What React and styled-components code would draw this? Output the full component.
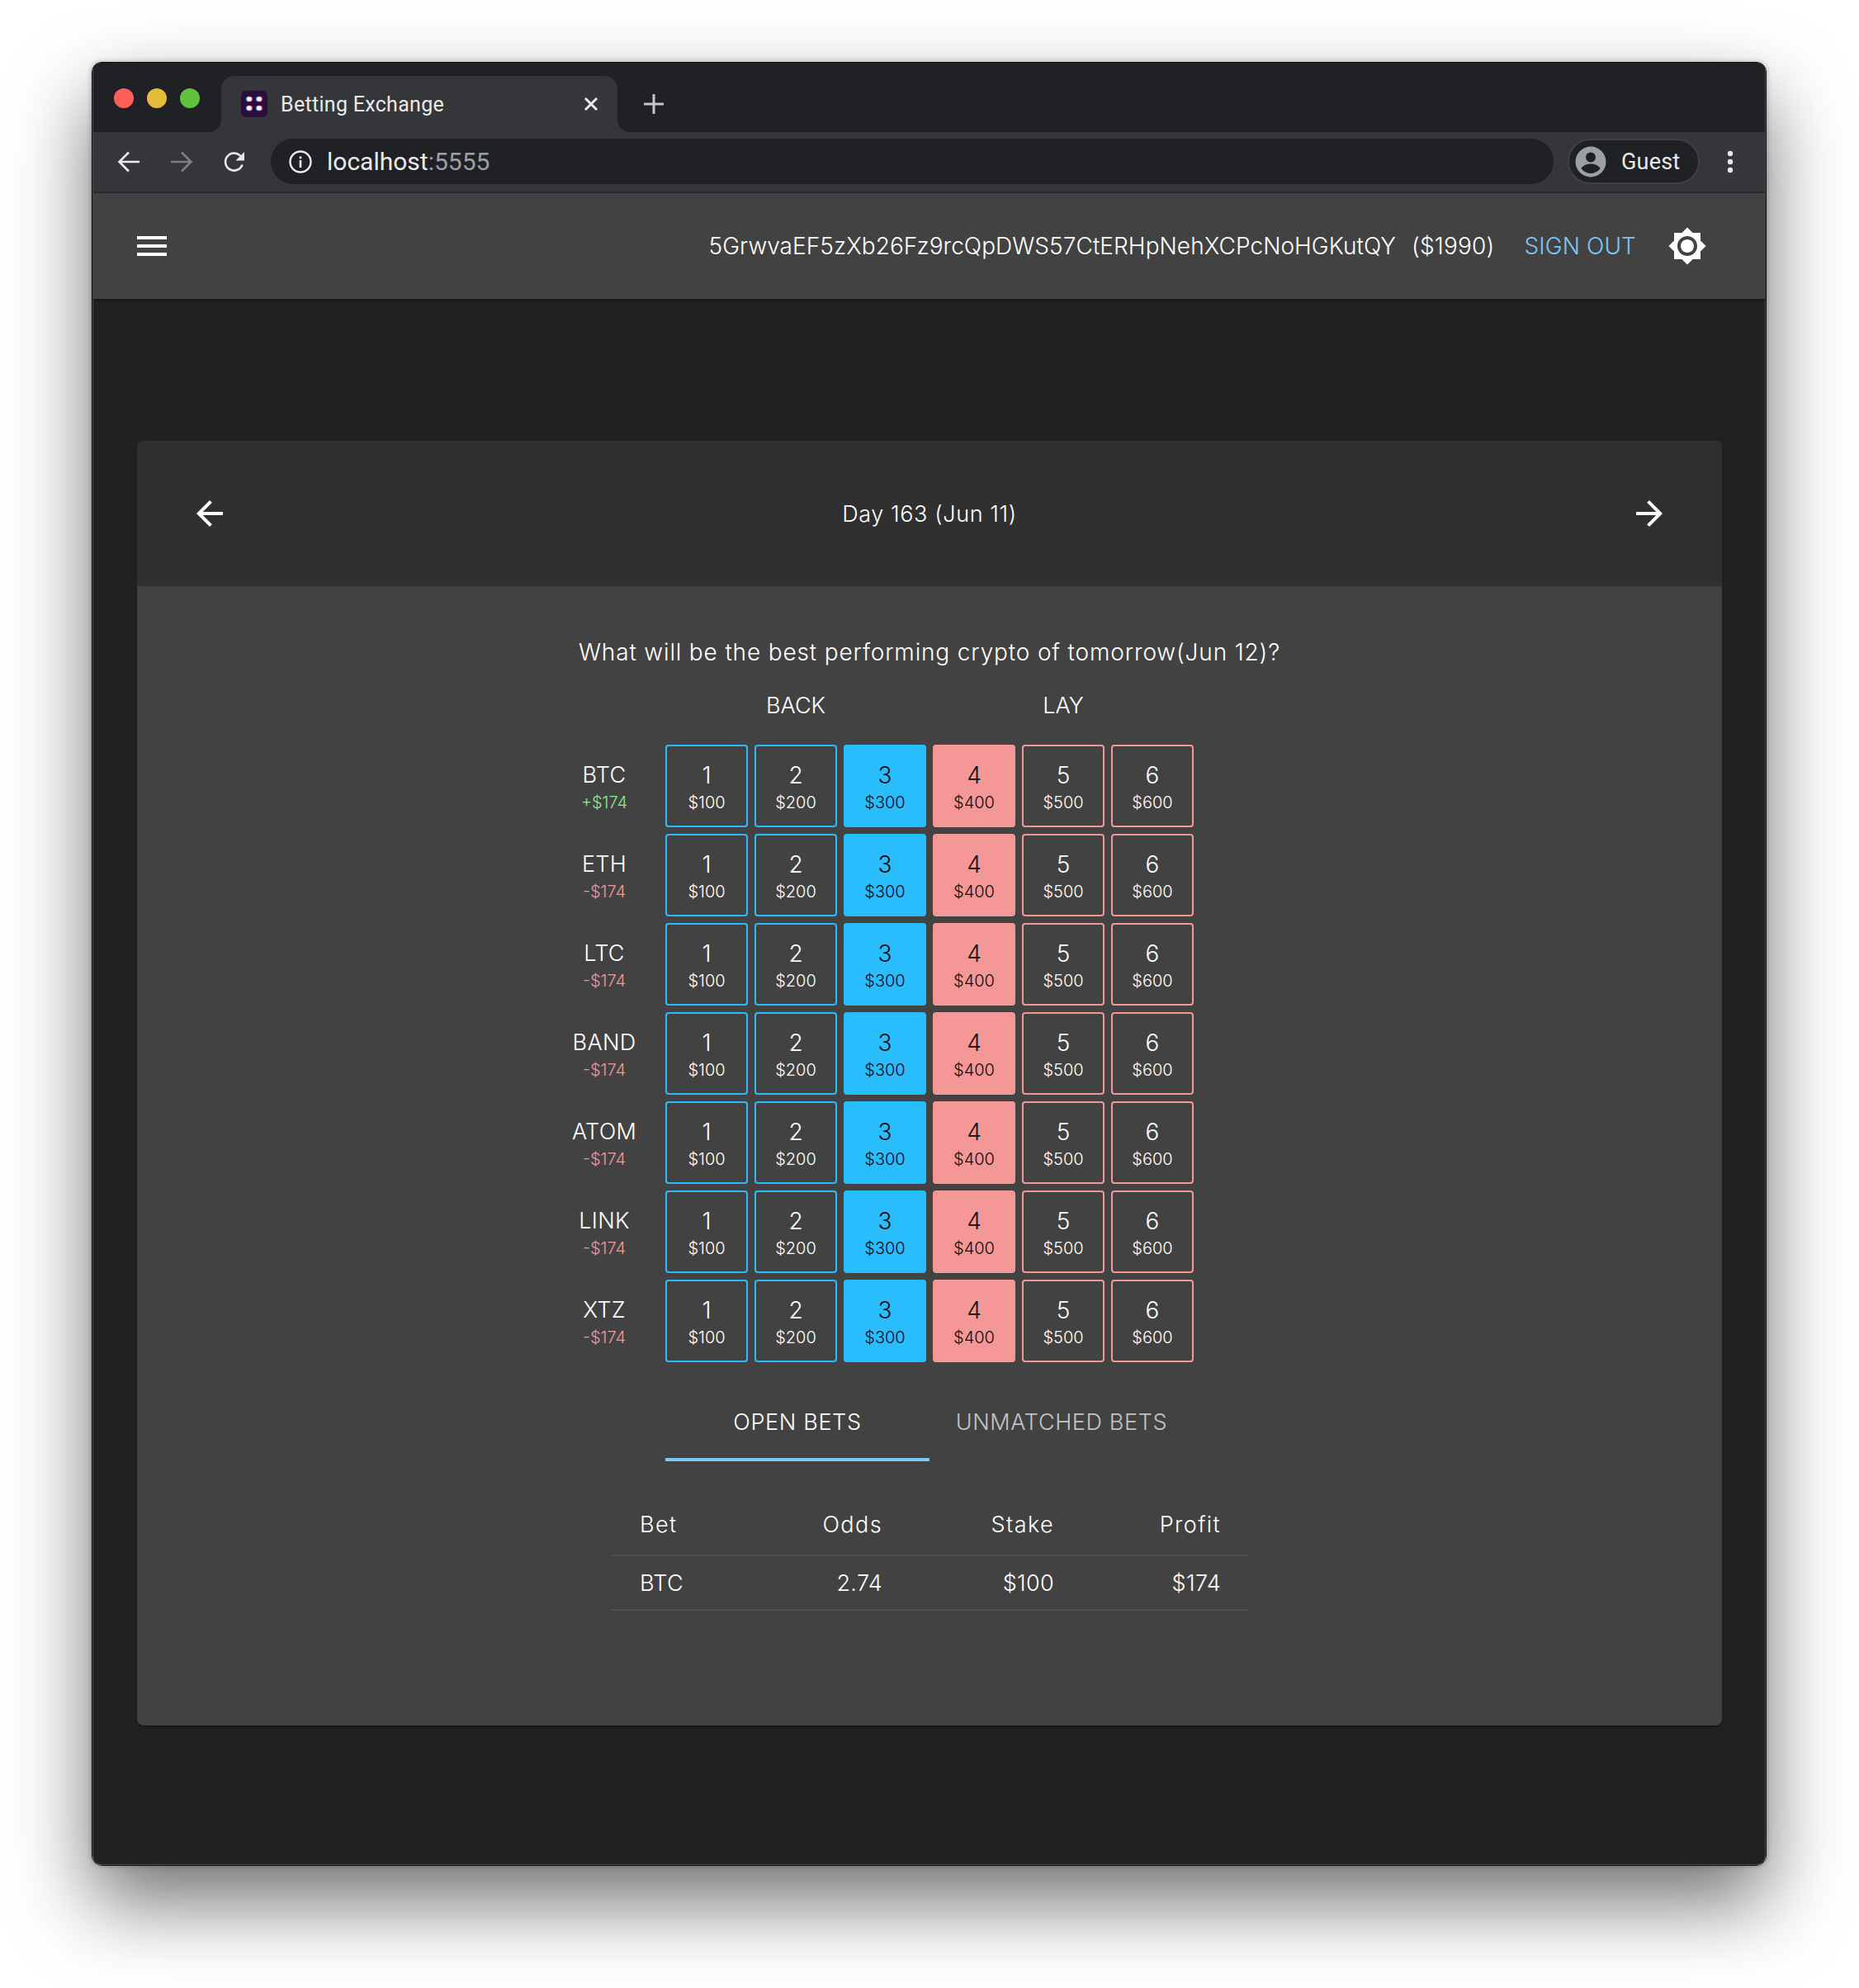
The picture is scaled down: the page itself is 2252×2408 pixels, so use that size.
import React from "react";
import styled, { createGlobalStyle } from "styled-components";

const GlobalStyle = createGlobalStyle`
  html, body {
    margin: 0;
    padding: 0;
    background: #fff;
  }
  body {
    width: 2252px;
    height: 2408px;
    overflow: hidden;
    font-family: "Inter", "Liberation Sans", sans-serif;
  }
  * {
    box-sizing: border-box;
  }
`;

const Page = styled.div`
  width: 2252px;
  height: 2408px;
  padding: 75px 0 0 111px;
`;

const Browser = styled.div`
  width: 2029px;
  height: 2185px;
  border: 1px solid #0c0c0c;
  border-radius: 12px;
  overflow: hidden;
  box-shadow: 0 44px 96px rgba(0, 0, 0, 0.56), 0 0 6px rgba(0, 0, 0, 0.3);
`;

const Frame = styled.div`
  height: 100%;
  display: flex;
  flex-direction: column;
  background: #212121;
  border: 1px solid #4b4b4b;
  border-top: 0;
  border-radius: 0 0 10px 10px;
`;

const TabStrip = styled.div`
  height: 84px;
  flex: none;
  display: flex;
  align-items: flex-start;
  background: #202124;
`;

const Lights = styled.div`
  display: flex;
  gap: 16px;
  margin: 31px 26px 0 25px;
`;

const Light = styled.span`
  width: 24px;
  height: 24px;
  border-radius: 50%;
  background: ${(p) => p.$color};
`;

const Tab = styled.div`
  position: relative;
  width: 480px;
  height: 68px;
  margin-top: 16px;
  padding: 0 23px 0 24px;
  display: flex;
  align-items: center;
  background: #35363a;
  border-radius: 16px 16px 0 0;
  color: #e8eaed;

  &::before,
  &::after {
    content: "";
    position: absolute;
    bottom: 0;
    width: 16px;
    height: 16px;
  }
  &::before {
    left: -16px;
    background: radial-gradient(circle at 0 0, transparent 16px, #35363a 16.5px);
  }
  &::after {
    right: -16px;
    background: radial-gradient(circle at 100% 0, transparent 16px, #35363a 16.5px);
  }
`;

const TabTitle = styled.span`
  flex: 1;
  margin-left: 16px;
  font-family: "Roboto", "Liberation Sans", sans-serif;
  font-size: 25px;
  letter-spacing: 0.3px;
  white-space: nowrap;
`;

const NewTab = styled.div`
  width: 48px;
  height: 48px;
  margin: 26px 0 0 20px;
  display: flex;
  align-items: center;
  justify-content: center;
`;

const Toolbar = styled.div`
  height: 74px;
  flex: none;
  display: flex;
  align-items: flex-start;
  padding: 8px 0 0 11px;
  background: #35363a;
  border-bottom: 2px solid #2b2c2f;
`;

const NavButton = styled.div`
  width: 64px;
  height: 56px;
  display: flex;
  align-items: center;
  justify-content: center;
`;

const AddressBar = styled.div`
  flex: 1;
  height: 55px;
  margin-left: 12px;
  padding-left: 22px;
  display: flex;
  align-items: center;
  background: #202124;
  border-radius: 28px;
`;

const Url = styled.span`
  margin-left: 18px;
  font-family: "Roboto", "Liberation Sans", sans-serif;
  font-size: 30px;
  color: #e8eaed;
`;

const UrlPort = styled.span`
  color: #9aa0a6;
`;

const GuestPill = styled.div`
  width: 160px;
  height: 55px;
  margin-left: 17px;
  padding-left: 7px;
  display: flex;
  align-items: center;
  background: #202124;
  border: 2px solid #3f4044;
  border-radius: 28px;
  color: #e8eaed;
  font-family: "Roboto", "Liberation Sans", sans-serif;
  font-size: 27px;
`;

const GuestName = styled.span`
  margin-left: 18px;
  letter-spacing: 0.2px;
`;

const MenuDots = styled.div`
  width: 72px;
  height: 55px;
  margin: 0 6px 0 1px;
  display: flex;
  align-items: center;
  justify-content: center;
`;

const AppBar = styled.header`
  position: relative;
  height: 128px;
  flex: none;
  display: flex;
  align-items: center;
  justify-content: space-between;
  padding: 0 70px 0 47px;
  background: #424242;
  color: #fff;
  font-size: 28px;
  font-weight: 300;
  box-shadow: 0 2px 4px rgba(0, 0, 0, 0.3);
`;

const Account = styled.div`
  display: flex;
  align-items: center;
`;

const Wallet = styled.span`
  letter-spacing: 0.05px;
`;

const Balance = styled.span`
  margin-left: 19px;
  letter-spacing: 0.2px;
`;

const SignOut = styled.span`
  margin: 0 38px 0 36px;
  color: #7cc6f5;
  letter-spacing: 0.1px;
`;

const Main = styled.main`
  flex: 1;
  padding: 172px 52px 0 53px;
`;

const Card = styled.section`
  height: 1556px;
  background: #424242;
  border-radius: 8px;
  overflow: hidden;
  box-shadow: 0 2px 2px rgba(0, 0, 0, 0.25);
  color: #fff;
  font-weight: 300;
`;

const CardHeader = styled.div`
  height: 176px;
  padding: 0 64px;
  display: flex;
  align-items: center;
  justify-content: space-between;
  background: #303030;
  font-size: 27px;
  letter-spacing: 0.6px;
`;

const CardBody = styled.div`
  display: flex;
  flex-direction: column;
  align-items: center;
  padding-top: 60px;
`;

const Question = styled.div`
  height: 40px;
  font-size: 28px;
  line-height: 40px;
  letter-spacing: 0.85px;
  white-space: nowrap;
`;

const SideHeads = styled.div`
  width: 640px;
  margin: 25px 0 27px;
  display: flex;
  gap: 8px;
`;

const SideHead = styled.div`
  flex: 1;
  height: 40px;
  text-align: center;
  font-size: 27px;
  line-height: 40px;
`;

const Board = styled.div`
  display: flex;
  flex-direction: column;
  gap: 8px;
`;

const Row = styled.div`
  display: grid;
  grid-template-columns: 190px 640px 190px;
`;

const Odds = styled.div`
  display: grid;
  grid-template-columns: repeat(6, 100px);
  gap: 8px;
`;

const Coin = styled.div`
  width: 132px;
  justify-self: end;
  margin-right: 8px;
  padding-top: 4px;
  display: flex;
  flex-direction: column;
  align-items: center;
  justify-content: center;
`;

const CoinName = styled.div`
  font-size: 27px;
  line-height: 36px;
  letter-spacing: 0.3px;
`;

const CoinResult = styled.div`
  font-size: 20px;
  line-height: 30px;
  color: ${(p) => (p.$up ? "#8fe98f" : "#f29898")};
`;

const OddButton = styled.div`
  height: 100px;
  padding-top: 4px;
  display: flex;
  flex-direction: column;
  align-items: center;
  justify-content: center;
  border: 2px solid ${(p) => (p.$side === "back" ? "#29bdfd" : "#f69797")};
  border-radius: 4px;
  background: ${(p) => (p.$filled ? (p.$side === "back" ? "#29bdfd" : "#f69797") : "transparent")};
  color: ${(p) => (p.$filled ? "#0b0b0b" : "#fff")};
`;

const OddPrice = styled.div`
  font-size: 28px;
  line-height: 36px;
`;

const OddStake = styled.div`
  font-size: 20px;
  line-height: 30px;
`;

const Tabs = styled.div`
  width: 640px;
  margin-top: 24px;
  display: flex;
`;

const BetTab = styled.div`
  flex: 1;
  height: 96px;
  padding-top: 4px;
  display: flex;
  align-items: center;
  justify-content: center;
  border-bottom: 4px solid ${(p) => (p.$active ? "#7cc6f5" : "transparent")};
  color: ${(p) => (p.$active ? "#fff" : "rgba(255, 255, 255, 0.7)")};
  font-size: 27px;
  letter-spacing: 0.65px;
  white-space: nowrap;
`;

const BetTable = styled.div`
  width: 770px;
  margin-top: 41px;
`;

const BetRow = styled.div`
  height: ${(p) => p.$height}px;
  padding-bottom: ${(p) => (p.$head ? 1 : 0)}px;
  display: grid;
  grid-template-columns: 160px 200px 208px 202px;
  align-items: center;
  border-bottom: 2px solid #515151;
  font-size: 27px;
  letter-spacing: ${(p) => (p.$head ? 1.4 : 0.3)}px;
`;

const BetCell = styled.div`
  padding: 0 32px 0 ${(p) => (p.$left ? 34 : 32)}px;
  text-align: ${(p) => (p.$left ? "left" : "right")};
  white-space: nowrap;
`;

const Favicon = () => (
  <svg width="32" height="32" viewBox="0 0 32 32">
    <rect width="32" height="32" rx="6" fill="#2a0f3c" />
    {[[10, 10], [22, 10], [10, 21], [22, 21]].map(([x, y]) => (
      <g key={`${x}-${y}`}>
        <circle cx={x - 0.8} cy={y} r="3.2" fill="#4aa3ff" />
        <circle cx={x + 0.8} cy={y} r="3.2" fill="#ff3d7f" />
        <circle cx={x} cy={y} r="2.8" fill="#fff" />
      </g>
    ))}
  </svg>
);

const CloseIcon = () => (
  <svg width="18" height="18" viewBox="0 0 18 18">
    <path d="M2 2l14 14M16 2L2 16" stroke="#e8eaed" strokeWidth="3" fill="none" />
  </svg>
);

const PlusIcon = () => (
  <svg width="24" height="24" viewBox="0 0 24 24">
    <path d="M12 1v22M1 12h22" stroke="#c4c6ca" strokeWidth="3" strokeLinecap="round" fill="none" />
  </svg>
);

const ChromeArrow = ({ color, flip }) => (
  <svg width="28" height="26" viewBox="0 0 28 26" style={flip ? { transform: "scaleX(-1)" } : undefined}>
    <path d="M27 13H3M14 1.5L2.5 13 14 24.5" stroke={color} strokeWidth="2.6" fill="none" />
  </svg>
);

const ReloadIcon = () => (
  <svg width="28" height="28" viewBox="0 0 28 28">
    <path d="M23.5 17.5a10.5 10.5 0 1 1-2.2-10.6" stroke="#e8eaed" strokeWidth="2.6" fill="none" />
    <path d="M26 2v10.5H15.500z" fill="#e8eaed" />
  </svg>
);

const InfoIcon = () => (
  <svg width="28" height="28" viewBox="0 0 28 28">
    <circle cx="14" cy="14" r="12.500" stroke="#e8eaed" strokeWidth="2.4" fill="none" />
    <rect x="12.700" y="12" width="2.600" height="9" fill="#e8eaed" />
    <rect x="12.700" y="7.500" width="2.600" height="2.800" fill="#e8eaed" />
  </svg>
);

const GuestIcon = () => (
  <svg width="38" height="38" viewBox="0 0 38 38">
    <circle cx="19" cy="19" r="18.500" fill="#9aa0a6" />
    <circle cx="19" cy="13.500" r="6" fill="#202124" />
    <path d="M7.500 27c2.400-3.700 7-5.400 11.500-5.400s9.100 1.700 11.500 5.400c-2.600 3.600-6.800 6-11.500 6s-8.900-2.400-11.500-6z" fill="#202124" />
  </svg>
);

const DotsIcon = () => (
  <svg width="8" height="28" viewBox="0 0 8 28">
    <circle cx="4" cy="4" r="3.200" fill="#e8eaed" />
    <circle cx="4" cy="14" r="3.200" fill="#e8eaed" />
    <circle cx="4" cy="24" r="3.200" fill="#e8eaed" />
  </svg>
);

const MuiIcon = ({ d }) => (
  <svg width="48" height="48" viewBox="0 0 24 24" fill="#fff">
    <path d={d} />
  </svg>
);

const MENU = "M3 18h18v-2H3v2zm0-5h18v-2H3v2zm0-7v2h18V6H3z";
const BRIGHTNESS =
  "M20 8.69V4h-4.69L12 .69 8.69 4H4v4.69L.69 12 4 15.31V20h4.69L12 23.31 15.31 20H20v-4.69L23.31 12 20 8.69zM12 18c-3.31 0-6-2.69-6-6s2.69-6 6-6 6 2.69 6 6-2.69 6-6 6zm0-10c-2.21 0-4 1.79-4 4s1.79 4 4 4 4-1.790 4-4-1.790-4-4-4z";
const ARROW_BACK = "M20 11H7.83l5.59-5.59L12 4l-8 8 8 8 1.41-1.41L7.83 13H20v-2z";
const ARROW_FORWARD = "M12 4l-1.41 1.41L16.17 11H4v2h12.17l-5.58 5.59L12 20l8-8z";

const COINS = [
  { name: "BTC", result: "+$174", up: true },
  { name: "ETH", result: "-$174" },
  { name: "LTC", result: "-$174" },
  { name: "BAND", result: "-$174" },
  { name: "ATOM", result: "-$174" },
  { name: "LINK", result: "-$174" },
  { name: "XTZ", result: "-$174" },
];

const ODDS = [1, 2, 3, 4, 5, 6];

const App = () => (
  <Page>
    <GlobalStyle />
    <Browser>
      <Frame>
        <TabStrip>
          <Lights>
            <Light $color="#ff5f57" />
            <Light $color="#e4bb3a" />
            <Light $color="#5fc23a" />
          </Lights>
          <Tab>
            <Favicon />
            <TabTitle>Betting Exchange</TabTitle>
            <CloseIcon />
          </Tab>
          <NewTab>
            <PlusIcon />
          </NewTab>
        </TabStrip>
        <Toolbar>
          <NavButton>
            <ChromeArrow color="#e8eaed" />
          </NavButton>
          <NavButton>
            <ChromeArrow color="#7d7f83" flip />
          </NavButton>
          <NavButton>
            <ReloadIcon />
          </NavButton>
          <AddressBar>
            <InfoIcon />
            <Url>
              localhost<UrlPort>:5555</UrlPort>
            </Url>
          </AddressBar>
          <GuestPill>
            <GuestIcon />
            <GuestName>Guest</GuestName>
          </GuestPill>
          <MenuDots>
            <DotsIcon />
          </MenuDots>
        </Toolbar>
        <AppBar>
          <MuiIcon d={MENU} />
          <Account>
            <Wallet>5GrwvaEF5zXb26Fz9rcQpDWS57CtERHpNehXCPcNoHGKutQY</Wallet>
            <Balance>($1990)</Balance>
            <SignOut>SIGN OUT</SignOut>
            <MuiIcon d={BRIGHTNESS} />
          </Account>
        </AppBar>
        <Main>
          <Card>
            <CardHeader>
              <MuiIcon d={ARROW_BACK} />
              <span>Day 163 (Jun 11)</span>
              <MuiIcon d={ARROW_FORWARD} />
            </CardHeader>
            <CardBody>
              <Question>What will be the best performing crypto of tomorrow(Jun 12)?</Question>
              <SideHeads>
                <SideHead>BACK</SideHead>
                <SideHead>LAY</SideHead>
              </SideHeads>
              <Board>
                {COINS.map((coin) => (
                  <Row key={coin.name}>
                    <Coin>
                      <CoinName>{coin.name}</CoinName>
                      <CoinResult $up={coin.up}>{coin.result}</CoinResult>
                    </Coin>
                    <Odds>
                      {ODDS.map((n) => (
                        <OddButton key={n} $side={n <= 3 ? "back" : "lay"} $filled={n === 3 || n === 4}>
                          <OddPrice>{n}</OddPrice>
                          <OddStake>${n}00</OddStake>
                        </OddButton>
                      ))}
                    </Odds>
                  </Row>
                ))}
              </Board>
              <Tabs>
                <BetTab $active>OPEN BETS</BetTab>
                <BetTab>UNMATCHED BETS</BetTab>
              </Tabs>
              <BetTable>
                <BetRow $height={74} $head>
                  <BetCell $left>Bet</BetCell>
                  <BetCell>Odds</BetCell>
                  <BetCell>Stake</BetCell>
                  <BetCell>Profit</BetCell>
                </BetRow>
                <BetRow $height={66}>
                  <BetCell $left>BTC</BetCell>
                  <BetCell>2.74</BetCell>
                  <BetCell>$100</BetCell>
                  <BetCell>$174</BetCell>
                </BetRow>
              </BetTable>
            </CardBody>
          </Card>
        </Main>
      </Frame>
    </Browser>
  </Page>
);

export default App;
